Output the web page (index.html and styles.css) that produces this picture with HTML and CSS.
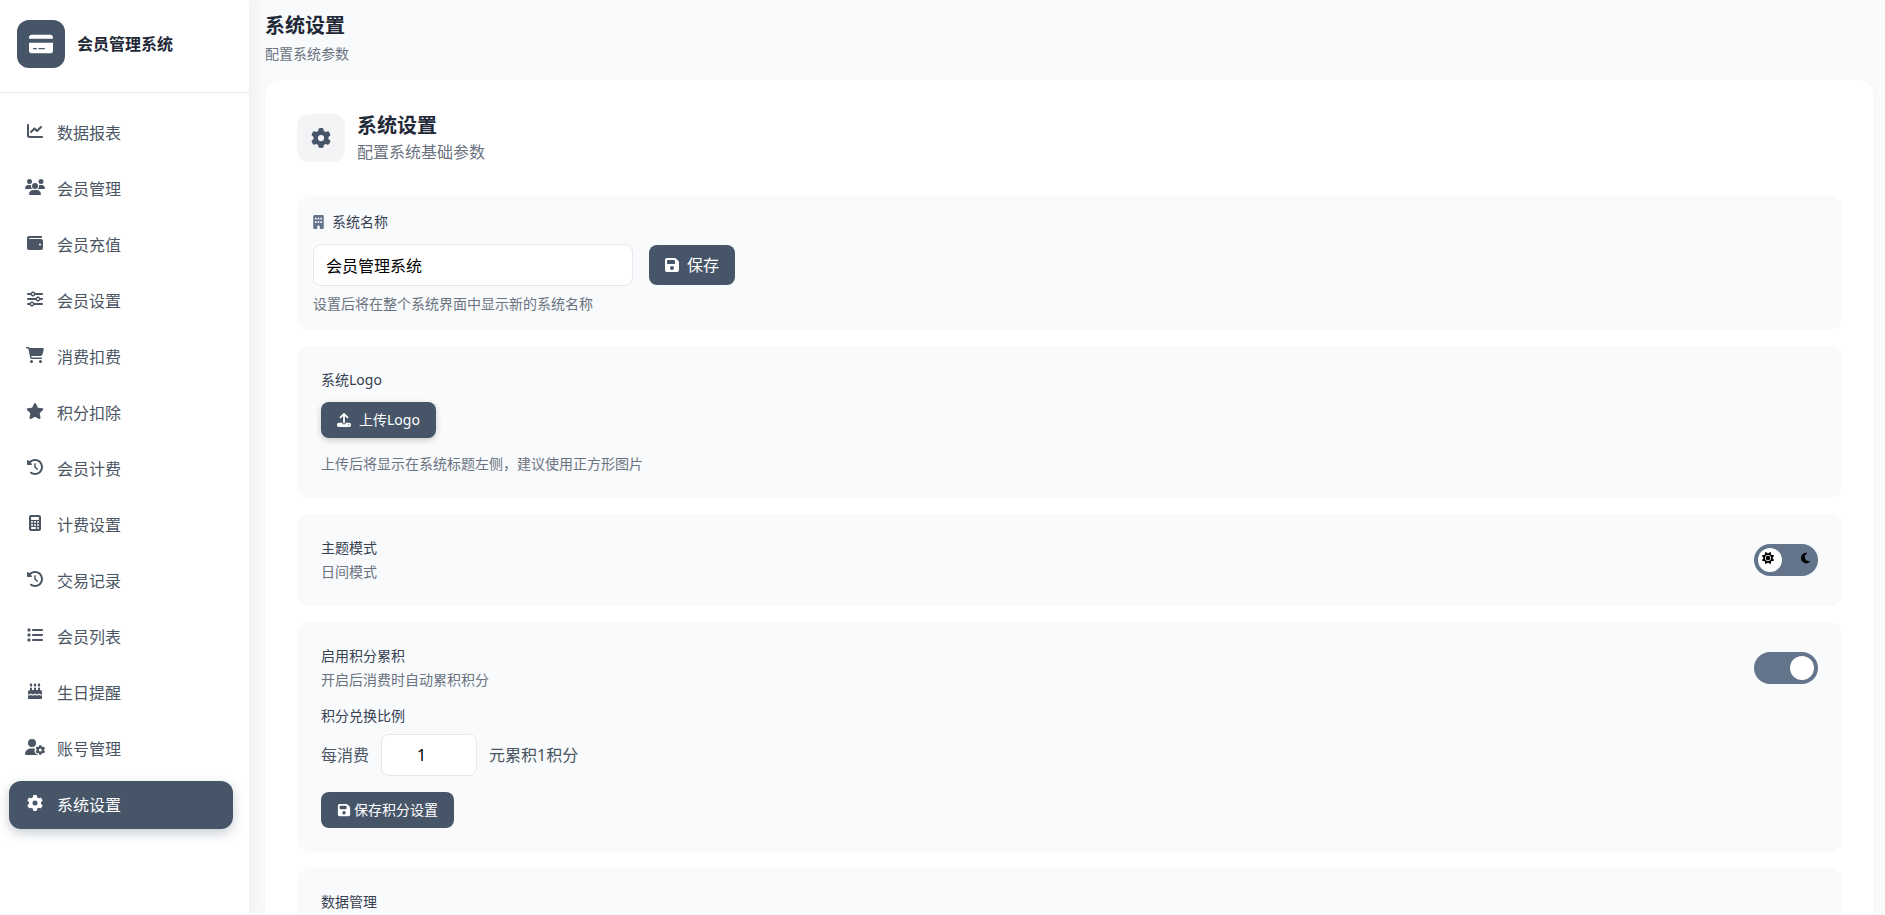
FILE: index.html
```html
<!DOCTYPE html>
<html lang="zh-CN">
<head>
    <meta charset="UTF-8">
    <meta name="viewport" content="width=device-width, initial-scale=1.0">
    <title>会员管理系统</title>
    <link rel="stylesheet" href="styles.css">
</head>
<body>
    <!-- Icon sprite -->
    <svg class="sprite" aria-hidden="true">
        <symbol id="i-card" viewBox="0 0 576 512"><path d="M64 32C28.700 32 0 60.700 0 96v32H576V96c0-35.300-28.700-64-64-64H64zM576 224H0V416c0 35.300 28.700 64 64 64H512c35.300 0 64-28.700 64-64V224zM112 352h64c8.800 0 16 7.200 16 16s-7.200 16-16 16H112c-8.800 0-16-7.200-16-16s7.200-16 16-16zm112 16c0-8.800 7.200-16 16-16H368c8.800 0 16 7.200 16 16s-7.200 16-16 16H240c-8.800 0-16-7.200-16-16z"/></symbol>
        <symbol id="i-chart" viewBox="0 0 512 512"><path d="M64 64c0-17.700-14.300-32-32-32S0 46.300 0 64V400c0 44.200 35.800 80 80 80H480c17.700 0 32-14.300 32-32s-14.300-32-32-32H80c-8.800 0-16-7.200-16-16V64zm406.600 86.600c12.500-12.500 12.500-32.800 0-45.300s-32.800-12.500-45.300 0L320 210.700l-57.400-57.400c-12.500-12.500-32.800-12.500-45.300 0l-112 112c-12.500 12.500-12.500 32.800 0 45.300s32.800 12.500 45.300 0L240 221.300l57.400 57.400c12.500 12.500 32.800 12.500 45.300 0l128-128z"/></symbol>
        <symbol id="i-users" viewBox="0 0 640 512"><path d="M144 0a80 80 0 1 1 0 160A80 80 0 1 1 144 0zM512 0a80 80 0 1 1 0 160A80 80 0 1 1 512 0zM0 298.700C0 239.800 47.800 192 106.700 192h42.700c15.900 0 31 3.500 44.600 9.700c-1.300 7.200-1.900 14.700-1.900 22.300c0 38.200 16.800 72.500 43.300 96c-.2 0-.4 0-.7 0H21.300C9.600 320 0 310.400 0 298.700zM405.300 320c-.2 0-.4 0-.7 0c26.600-23.500 43.300-57.800 43.300-96c0-7.600-.7-15-1.900-22.300c13.600-6.300 28.700-9.700 44.600-9.700h42.700C592.200 192 640 239.800 640 298.700c0 11.800-9.600 21.300-21.300 21.300H405.300zM224 224a96 96 0 1 1 192 0 96 96 0 1 1 -192 0zM128 485.300C128 411.700 187.700 352 261.300 352H378.700C452.300 352 512 411.700 512 485.300c0 14.700-11.900 26.700-26.700 26.700H154.700c-14.700 0-26.700-11.900-26.700-26.700z"/></symbol>
        <symbol id="i-wallet" viewBox="0 0 512 512"><path d="M64 32C28.700 32 0 60.700 0 96V416c0 35.300 28.700 64 64 64H448c35.300 0 64-28.700 64-64V192c0-35.300-28.700-64-64-64H80c-8.800 0-16-7.200-16-16s7.200-16 16-16H448c17.700 0 32-14.300 32-32s-14.300-32-32-32H64zM416 272a32 32 0 1 1 0 64 32 32 0 1 1 0-64z"/></symbol>
        <symbol id="i-sliders" viewBox="0 0 512 512"><path d="M0 416c0 17.700 14.300 32 32 32l54.700 0c12.300 28.300 40.500 48 73.300 48s61-19.700 73.300-48L480 448c17.700 0 32-14.300 32-32s-14.300-32-32-32l-246.700 0c-12.300-28.300-40.500-48-73.300-48s-61 19.700-73.300 48L32 384c-17.700 0-32 14.300-32 32zm128 0a32 32 0 1 1 64 0 32 32 0 1 1 -64 0zM320 256a32 32 0 1 1 64 0 32 32 0 1 1 -64 0zm32-80c-32.800 0-61 19.700-73.300 48L32 224c-17.700 0-32 14.300-32 32s14.300 32 32 32l246.700 0c12.300 28.300 40.500 48 73.300 48s61-19.700 73.300-48l54.700 0c17.700 0 32-14.300 32-32s-14.300-32-32-32l-54.700 0c-12.300-28.300-40.500-48-73.300-48zM192 128a32 32 0 1 1 0-64 32 32 0 1 1 0 64zm73.300-64C253 35.700 224.800 16 192 16s-61 19.700-73.300 48L32 64C14.300 64 0 78.300 0 96s14.300 32 32 32l86.700 0c12.300 28.300 40.500 48 73.300 48s61-19.700 73.300-48L480 128c17.700 0 32-14.300 32-32s-14.300-32-32-32L265.300 64z"/></symbol>
        <symbol id="i-cart" viewBox="0 0 576 512"><path d="M0 24C0 10.700 10.700 0 24 0H69.500c22 0 41.500 12.800 50.600 32h411c26.300 0 45.500 25 38.600 50.400l-41 152.300c-8.500 31.400-37 53.300-69.500 53.300H170.700l5.400 28.500c2.200 11.300 12.100 19.500 23.600 19.500H488c13.300 0 24 10.700 24 24s-10.700 24-24 24H199.700c-34.600 0-64.300-24.600-70.700-58.500L77.400 54.500c-.7-3.800-4-6.500-7.900-6.500H24C10.700 48 0 37.300 0 24zM128 464a48 48 0 1 1 96 0 48 48 0 1 1 -96 0zm336-48a48 48 0 1 1 0 96 48 48 0 1 1 0-96z"/></symbol>
        <symbol id="i-star" viewBox="0 0 576 512"><path d="M316.900 18C311.600 7 300.400 0 288.100 0s-23.400 7-28.800 18L195 150.300 51.400 171.500c-12 1.800-22 10.200-25.700 21.700s-.7 24.200 7.900 32.700L137.800 329 113.200 474.700c-2 12 3 24.200 12.900 31.300s23 8 33.800 2.300l128.300-68.500 128.300 68.500c10.800 5.700 23.900 4.900 33.800-2.300s14.900-19.300 12.900-31.300L438.500 329 542.700 225.900c8.600-8.500 11.700-21.200 7.900-32.700s-13.700-19.900-25.700-21.700L381.200 150.300 316.900 18z"/></symbol>
        <symbol id="i-history" viewBox="0 0 512 512"><path d="M75 75L41 41C25.900 25.900 0 36.600 0 57.900V168c0 13.300 10.700 24 24 24H134.100c21.400 0 32.100-25.900 17-41l-30.800-30.800C155 85.500 203 64 256 64c106 0 192 86 192 192s-86 192-192 192c-40.800 0-78.600-12.700-109.700-34.400c-14.500-10.100-34.400-6.600-44.600 7.900s-6.600 34.400 7.900 44.600C151.200 495 201.700 512 256 512c141.400 0 256-114.600 256-256S397.400 0 256 0C185.300 0 121.300 28.700 75 75zm181 53c-13.300 0-24 10.700-24 24V256c0 6.400 2.500 12.500 7 17l72 72c9.400 9.400 24.600 9.400 33.900 0s9.400-24.600 0-33.900l-65-65V152c0-13.300-10.700-24-24-24z"/></symbol>
        <symbol id="i-calculator" viewBox="0 0 384 512"><path d="M64 0C28.700 0 0 28.700 0 64V448c0 35.300 28.700 64 64 64H320c35.300 0 64-28.700 64-64V64c0-35.300-28.700-64-64-64H64zM96 64H288c17.700 0 32 14.300 32 32v32c0 17.700-14.300 32-32 32H96c-17.700 0-32-14.300-32-32V96c0-17.700 14.300-32 32-32zm32 160a32 32 0 1 1 -64 0 32 32 0 1 1 64 0zM96 352a32 32 0 1 1 0-64 32 32 0 1 1 0 64zM64 416c0-17.700 14.300-32 32-32h96c17.700 0 32 14.300 32 32s-14.300 32-32 32H96c-17.700 0-32-14.300-32-32zM192 256a32 32 0 1 1 0-64 32 32 0 1 1 0 64zm32 64a32 32 0 1 1 -64 0 32 32 0 1 1 64 0zm64-64a32 32 0 1 1 0-64 32 32 0 1 1 0 64zm32 64a32 32 0 1 1 -64 0 32 32 0 1 1 64 0zM288 448a32 32 0 1 1 0-64 32 32 0 1 1 0 64z"/></symbol>
        <symbol id="i-list" viewBox="0 0 512 512"><path d="M40 48C26.700 48 16 58.700 16 72v48c0 13.300 10.700 24 24 24H88c13.300 0 24-10.700 24-24V72c0-13.300-10.700-24-24-24H40zM192 64c-17.700 0-32 14.300-32 32s14.300 32 32 32H480c17.700 0 32-14.300 32-32s-14.300-32-32-32H192zm0 160c-17.700 0-32 14.300-32 32s14.300 32 32 32H480c17.700 0 32-14.300 32-32s-14.300-32-32-32H192zm0 160c-17.700 0-32 14.300-32 32s14.300 32 32 32H480c17.700 0 32-14.300 32-32s-14.300-32-32-32H192zM16 232v48c0 13.300 10.700 24 24 24H88c13.300 0 24-10.700 24-24V232c0-13.300-10.700-24-24-24H40c-13.300 0-24 10.700-24 24zM40 368c-13.300 0-24 10.700-24 24v48c0 13.300 10.700 24 24 24H88c13.300 0 24-10.700 24-24V392c0-13.300-10.700-24-24-24H40z"/></symbol>
        <symbol id="i-cake" viewBox="0 0 448 512"><path d="M86.400 5.500L61.800 47.600C58 54.100 56 61.600 56 69.200V72c0 22.100 17.900 40 40 40s40-17.900 40-40V69.200c0-7.600-2-15-5.800-21.600L105.600 5.500C103.600 2.100 100 0 96 0s-7.600 2.100-9.600 5.500zm128 0L189.800 47.600c-3.800 6.500-5.800 14-5.800 21.600V72c0 22.100 17.900 40 40 40s40-17.900 40-40V69.200c0-7.600-2-15-5.800-21.600L233.600 5.500C231.600 2.100 228 0 224 0s-7.600 2.100-9.600 5.500zM317.800 47.600c-3.800 6.500-5.800 14-5.800 21.600V72c0 22.100 17.900 40 40 40s40-17.900 40-40V69.200c0-7.600-2-15-5.800-21.600L361.600 5.500C359.600 2.100 356 0 352 0s-7.600 2.100-9.600 5.500L317.800 47.600zM128 176c0-17.700-14.300-32-32-32s-32 14.300-32 32v48c-35.300 0-64 28.700-64 64v71c8.300 5.200 18.100 9 28.800 9c13.500 0 27.200-6.100 38.400-13.400c5.400-3.500 9.900-7.100 13-9.700c1.500-1.300 2.700-2.400 3.500-3.100l.9-.9c3.100-3.200 7.400-4.900 11.900-4.800s8.600 2.100 11.600 5.400l.8 .8c.7 .7 1.700 1.700 3.100 3c2.800 2.600 6.800 6.100 11.800 9.500c10.200 7.100 23 13.100 36.300 13.100s26.100-6 36.300-13.100c5-3.500 9-6.900 11.800-9.500c1.400-1.300 2.400-2.300 3.100-3l.8-.8c3-3.500 7.400-5.400 12-5.400s9 2 12 5.400l.8 .8c.7 .7 1.700 1.700 3.100 3c2.800 2.600 6.800 6.100 11.800 9.500c10.200 7.100 23 13.100 36.300 13.100s26.100-6 36.300-13.100c5-3.500 9-6.900 11.800-9.500c1.400-1.300 2.400-2.300 3.100-3l.8-.8c2.900-3.400 7.100-5.300 11.600-5.400s8.700 1.600 11.900 4.800l.9 .9c.8 .7 1.900 1.800 3.500 3.100c3.100 2.600 7.500 6.200 13 9.700c11.200 7.300 24.900 13.400 38.400 13.400c10.700 0 20.500-3.900 28.800-9V288c0-35.300-28.700-64-64-64V176c0-17.700-14.300-32-32-32s-32 14.300-32 32v48H256V176c0-17.700-14.300-32-32-32s-32 14.300-32 32v48H128V176zM448 394.600c-8.500 3.300-18.200 5.400-28.800 5.400c-22.500 0-42.400-9.900-55.800-18.600c-4.100-2.700-7.800-5.400-10.900-7.800c-2.800 2.400-6.100 5-9.800 7.500C329.800 390 310.600 400 288 400s-41.800-10-54.600-18.900c-3.500-2.400-6.700-4.900-9.400-7.200c-2.700 2.300-5.900 4.700-9.400 7.200C201.800 390 182.600 400 160 400s-41.800-10-54.600-18.900c-3.700-2.600-7-5.200-9.800-7.500c-3.100 2.400-6.800 5.100-10.900 7.800C71.200 390.100 51.300 400 28.800 400c-10.600 0-20.300-2.200-28.800-5.400V480c0 17.700 14.300 32 32 32H416c17.700 0 32-14.300 32-32V394.600z"/></symbol>
        <symbol id="i-gear" viewBox="0 0 512 512"><path d="M495.900 166.600c3.200 8.700 .5 18.400-6.400 24.600l-43.300 39.400c1.100 8.300 1.700 16.800 1.700 25.400s-.6 17.100-1.700 25.400l43.300 39.400c6.900 6.200 9.600 15.900 6.400 24.600c-4.400 11.900-9.700 23.300-15.800 34.300l-4.700 8.100c-6.600 11-14 21.400-22.100 31.200c-5.900 7.200-15.700 9.600-24.500 6.800l-55.700-17.700c-13.400 10.300-28.200 18.900-44 25.400l-12.500 57.100c-2 9.100-9 16.300-18.200 17.800c-13.800 2.300-28 3.500-42.500 3.500s-28.700-1.200-42.500-3.500c-9.200-1.500-16.200-8.700-18.200-17.800l-12.500-57.100c-15.800-6.500-30.600-15.100-44-25.400L83.100 425.900c-8.800 2.800-18.600 .3-24.500-6.800c-8.100-9.800-15.500-20.200-22.100-31.200l-4.700-8.100c-6.100-11-11.400-22.400-15.800-34.300c-3.200-8.700-.5-18.400 6.400-24.600l43.300-39.400C64.600 273.100 64 264.600 64 256s.6-17.100 1.700-25.400L22.400 191.200c-6.900-6.200-9.600-15.900-6.400-24.600c4.400-11.900 9.700-23.300 15.800-34.300l4.700-8.100c6.600-11 14-21.400 22.100-31.200c5.900-7.200 15.700-9.600 24.500-6.800l55.700 17.700c13.400-10.300 28.200-18.900 44-25.400l12.500-57.100c2-9.100 9-16.300 18.200-17.800C227.300 1.200 241.500 0 256 0s28.700 1.200 42.500 3.500c9.200 1.500 16.200 8.700 18.200 17.800l12.500 57.100c15.800 6.500 30.600 15.100 44 25.400l55.700-17.700c8.800-2.800 18.600-.3 24.500 6.800c8.100 9.800 15.500 20.200 22.100 31.200l4.700 8.100c6.100 11 11.400 22.400 15.800 34.300zM256 336a80 80 0 1 0 0-160 80 80 0 1 0 0 160z"/></symbol>
        <symbol id="i-user-gear" viewBox="0 0 640 512"><path d="M224 0a128 128 0 1 1 0 256A128 128 0 1 1 224 0zM178.300 304h91.400c11.800 0 23.400 1.200 34.500 3.300c-2.100 18.500 7.400 35.600 21.800 44.800c-16.600 10.600-26.700 31.600-20 53.300c4 12.900 9.400 25.500 16.400 37.600s15.200 23.100 24.400 33c15.700 16.900 39.600 18.400 57.200 8.700v.9c0 9.200 2.700 18.500 7.900 26.300H29.700C13.300 512 0 498.700 0 482.300C0 383.800 79.800 304 178.300 304z"/><use href="#i-gear" x="334" y="192" width="312" height="320"/></symbol>
        <symbol id="i-building" viewBox="0 0 384 512"><path d="M48 0C21.500 0 0 21.500 0 48V464c0 26.500 21.500 48 48 48h96V432c0-26.500 21.500-48 48-48s48 21.500 48 48v80h96c26.500 0 48-21.500 48-48V48c0-26.500-21.500-48-48-48H48zM64 240c0-8.800 7.200-16 16-16h32c8.800 0 16 7.200 16 16v32c0 8.800-7.200 16-16 16H80c-8.800 0-16-7.200-16-16V240zm112-16h32c8.800 0 16 7.200 16 16v32c0 8.800-7.200 16-16 16H176c-8.800 0-16-7.200-16-16V240c0-8.800 7.200-16 16-16zm80 16c0-8.800 7.200-16 16-16h32c8.800 0 16 7.200 16 16v32c0 8.800-7.200 16-16 16H272c-8.800 0-16-7.200-16-16V240zM80 96h32c8.800 0 16 7.200 16 16v32c0 8.800-7.200 16-16 16H80c-8.800 0-16-7.200-16-16V112c0-8.800 7.200-16 16-16zm80 16c0-8.800 7.200-16 16-16h32c8.800 0 16 7.200 16 16v32c0 8.800-7.200 16-16 16H176c-8.800 0-16-7.200-16-16V112zM272 96h32c8.800 0 16 7.200 16 16v32c0 8.800-7.200 16-16 16H272c-8.800 0-16-7.200-16-16V112c0-8.800 7.200-16 16-16z"/></symbol>
        <symbol id="i-save" viewBox="0 0 448 512"><path d="M64 32C28.700 32 0 60.700 0 96V416c0 35.300 28.700 64 64 64H384c35.300 0 64-28.700 64-64V173.300c0-17-6.700-33.300-18.700-45.300L352 50.700C340 38.700 323.700 32 306.700 32H64zm0 96c0-17.700 14.300-32 32-32H288c17.700 0 32 14.300 32 32v64c0 17.700-14.300 32-32 32H96c-17.700 0-32-14.300-32-32V128zM224 288a64 64 0 1 1 0 128 64 64 0 1 1 0-128z"/></symbol>
        <symbol id="i-upload" viewBox="0 0 512 512"><path d="M288 109.300V352c0 17.700-14.300 32-32 32s-32-14.300-32-32V109.300l-73.400 73.400c-12.500 12.500-32.800 12.500-45.300 0s-12.500-32.800 0-45.300l128-128c12.500-12.500 32.800-12.500 45.300 0l128 128c12.500 12.500 12.500 32.800 0 45.300s-32.800 12.500-45.300 0L288 109.300zM64 352H192c0 35.300 28.700 64 64 64s64-28.700 64-64H448c35.300 0 64 28.700 64 64v32c0 35.300-28.700 64-64 64H64c-35.300 0-64-28.700-64-64V416c0-35.300 28.700-64 64-64zM432 456a24 24 0 1 0 0-48 24 24 0 1 0 0 48z"/></symbol>
        <symbol id="i-sun" viewBox="0 0 512 512"><path d="M361.500 1.200c5 2.100 8.600 6.600 9.600 11.900L391 121l107.900 19.800c5.300 1 9.800 4.600 11.900 9.600s1.500 10.700-1.600 15.200L446.900 256l62.300 90.300c3.100 4.500 3.700 10.200 1.600 15.200s-6.600 8.600-11.900 9.600L391 391 371.100 498.900c-1 5.300-4.600 9.800-9.600 11.900s-10.700 1.500-15.200-1.600L256 446.900l-90.300 62.300c-4.500 3.100-10.200 3.700-15.200 1.600s-8.600-6.600-9.600-11.900L121 391 13.100 371.100c-5.300-1-9.800-4.600-11.900-9.600s-1.500-10.700 1.600-15.200L65.100 256 2.800 165.700c-3.100-4.500-3.700-10.200-1.600-15.200s6.600-8.600 11.900-9.600L121 121 140.900 13.100c1-5.300 4.600-9.800 9.600-11.900s10.700-1.500 15.200 1.600L256 65.100 346.300 2.800c4.500-3.100 10.200-3.700 15.200-1.600zM160 256a96 96 0 1 1 192 0 96 96 0 1 1 -192 0zm224 0a128 128 0 1 0 -256 0 128 128 0 1 0 256 0z"/></symbol>
        <symbol id="i-moon" viewBox="0 0 384 512"><path d="M223.500 32C100 32 0 132.300 0 256S100 480 223.500 480c60.600 0 115.500-24.200 155.800-63.400c5-4.900 6.300-12.500 3.100-18.700s-10.100-9.700-17-8.500c-9.800 1.700-19.800 2.600-30.100 2.600c-96.900 0-175.500-78.800-175.500-176c0-65.800 36-123.100 89.300-153.300c6.100-3.500 9.200-10.500 7.700-17.300s-7.300-11.900-14.300-12.500c-6.300-.5-12.600-.8-19-.8z"/></symbol>
    </svg>

    <div class="layout">
        <aside class="sidebar">
            <div class="brand">
                <div class="brand-logo"><svg class="icon-lg"><use href="#i-card"/></svg></div>
                <span class="brand-name">会员管理系统</span>
            </div>
            <nav class="nav">
                <a href="#" class="nav-item"><span class="nav-icon"><svg><use href="#i-chart"/></svg></span>数据报表</a>
                <a href="#" class="nav-item"><span class="nav-icon"><svg><use href="#i-users"/></svg></span>会员管理</a>
                <a href="#" class="nav-item"><span class="nav-icon"><svg><use href="#i-wallet"/></svg></span>会员充值</a>
                <a href="#" class="nav-item"><span class="nav-icon"><svg><use href="#i-sliders"/></svg></span>会员设置</a>
                <a href="#" class="nav-item"><span class="nav-icon"><svg><use href="#i-cart"/></svg></span>消费扣费</a>
                <a href="#" class="nav-item"><span class="nav-icon"><svg><use href="#i-star"/></svg></span>积分扣除</a>
                <a href="#" class="nav-item"><span class="nav-icon"><svg><use href="#i-history"/></svg></span>会员计费</a>
                <a href="#" class="nav-item"><span class="nav-icon"><svg><use href="#i-calculator"/></svg></span>计费设置</a>
                <a href="#" class="nav-item"><span class="nav-icon"><svg><use href="#i-history"/></svg></span>交易记录</a>
                <a href="#" class="nav-item"><span class="nav-icon"><svg><use href="#i-list"/></svg></span>会员列表</a>
                <a href="#" class="nav-item"><span class="nav-icon"><svg><use href="#i-cake"/></svg></span>生日提醒</a>
                <a href="#" class="nav-item"><span class="nav-icon"><svg><use href="#i-user-gear"/></svg></span>账号管理</a>
                <a href="#" class="nav-item active"><span class="nav-icon"><svg><use href="#i-gear"/></svg></span>系统设置</a>
            </nav>
        </aside>

        <main class="main">
            <header class="page-header">
                <h1>系统设置</h1>
                <p class="hint">配置系统参数</p>
            </header>

            <div class="card">
                <div class="card-header">
                    <div class="card-icon"><svg class="icon-md"><use href="#i-gear"/></svg></div>
                    <div>
                        <h2>系统设置</h2>
                        <p>配置系统基础参数</p>
                    </div>
                </div>

                <!-- System name -->
                <section class="panel panel-compact">
                    <label for="system-name" class="field-label"><svg class="icon-building"><use href="#i-building"/></svg>系统名称</label>
                    <div class="name-row">
                        <input type="text" id="system-name" class="input" value="会员管理系统">
                        <button type="button" class="btn"><svg class="icon"><use href="#i-save"/></svg>保存</button>
                    </div>
                    <p class="hint name-hint">设置后将在整个系统界面中显示新的系统名称</p>
                </section>

                <!-- Logo -->
                <section class="panel">
                    <h3 class="field-label">系统Logo</h3>
                    <button type="button" class="btn btn-sm btn-raised"><svg class="icon-sm"><use href="#i-upload"/></svg>上传Logo</button>
                    <p class="hint logo-hint">上传后将显示在系统标题左侧，建议使用正方形图片</p>
                </section>

                <!-- Theme -->
                <section class="panel">
                    <div class="switch-row">
                        <div class="switch-text">
                            <label for="theme">主题模式</label>
                            <p class="hint">日间模式</p>
                        </div>
                        <div class="switch-wrap">
                            <input type="checkbox" id="theme" class="switch">
                            <svg class="switch-icon sun"><use href="#i-sun"/></svg>
                            <svg class="switch-icon moon"><use href="#i-moon"/></svg>
                        </div>
                    </div>
                </section>

                <!-- Points -->
                <section class="panel">
                    <div class="switch-row">
                        <div class="switch-text">
                            <label for="points">启用积分累积</label>
                            <p class="hint">开启后消费时自动累积积分</p>
                        </div>
                        <div class="switch-wrap">
                            <input type="checkbox" id="points" class="switch" checked>
                        </div>
                    </div>
                    <label for="ratio" class="ratio-label">积分兑换比例</label>
                    <div class="ratio-row">
                        <span>每消费</span>
                        <input type="number" id="ratio" class="input input-number" value="1" min="1">
                        <span>元累积1积分</span>
                    </div>
                    <button type="button" class="btn btn-sm btn-tight"><svg class="icon-sm"><use href="#i-save"/></svg>保存积分设置</button>
                </section>

                <!-- Data -->
                <section class="panel">
                    <h3 class="field-label">数据管理</h3>
                </section>
            </div>
        </main>
    </div>
</body>
</html>
```
FILE: styles.css
```css
:root {
    --primary: #475569;
    --switch: #64748b;
    --bg: #f8fafc;
    --border: #e5e7eb;
    --heading: #1f2937;
    --label: #374151;
    --text: #4b5563;
    --muted: #6b7280;
}

* {
    box-sizing: border-box;
    margin: 0;
    padding: 0;
}

body {
    font-family: "Noto Sans", "Noto Sans CJK SC", sans-serif;
    font-size: 16px;
    line-height: 24px;
    color: var(--text);
    background: var(--bg);
}

svg {
    display: block;
    fill: currentColor;
}

input,
button {
    font: inherit;
}

.sprite {
    display: none;
}

.layout {
    display: flex;
    height: 100vh;
    overflow: hidden;
}

/* Sidebar */
.sidebar {
    flex: none;
    width: 249px;
    background: #fff;
    box-shadow: 4px 0 16px rgba(0, 0, 0, 0.05);
}

.brand {
    display: flex;
    align-items: center;
    gap: 12px;
    padding: 20px 17px 24px;
    border-bottom: 1px solid var(--border);
}

.brand-logo {
    display: flex;
    align-items: center;
    justify-content: center;
    width: 48px;
    height: 48px;
    color: #fff;
    background: var(--primary);
    border-radius: 12px;
}

.brand-name {
    font-weight: 700;
    color: var(--heading);
}

.nav {
    display: flex;
    flex-direction: column;
    gap: 8px;
    padding: 16px 16px 16px 9px;
}

.nav-item {
    display: flex;
    align-items: center;
    gap: 12px;
    height: 48px;
    padding: 0 16px;
    color: var(--text);
    text-decoration: none;
    border-radius: 12px;
}

.nav-item:hover {
    background: #f3f4f6;
}

.nav-item.active {
    color: #fff;
    background: var(--primary);
    box-shadow: 0 4px 12px rgba(71, 85, 105, 0.3);
}

.nav-icon {
    width: 20px;
    padding-bottom: 4px;
}

.nav-icon svg {
    width: 20px;
    height: 16px;
}

/* Icon sizes */
.icon-lg {
    width: 24px;
    height: 22px;
}

.icon-md {
    width: 20px;
    height: 20px;
}

.icon {
    width: 14px;
    height: 16px;
}

.icon-sm {
    width: 14px;
    height: 14px;
}

.icon-building {
    width: 11px;
    height: 14px;
    color: var(--switch);
}

/* Content */
.main {
    flex: 1;
    padding: 12px 11px 16px 16px;
    overflow-y: auto;
    scrollbar-width: none;
}

.page-header {
    margin-bottom: 16px;
}

h1,
h2 {
    font-size: 20px;
    line-height: 28px;
    font-weight: 700;
    color: var(--heading);
}

.page-header .hint {
    margin-top: 4px;
}

.hint {
    font-size: 14px;
    line-height: 20px;
    color: var(--muted);
}

.card {
    padding: 32px;
    background: #fff;
    border-radius: 16px;
    box-shadow: 0 1px 3px rgba(0, 0, 0, 0.05);
}

.card-header {
    display: flex;
    align-items: center;
    gap: 12px;
    margin-bottom: 32px;
    color: var(--muted);
}

.card-icon {
    display: flex;
    align-items: center;
    justify-content: center;
    width: 48px;
    height: 48px;
    color: var(--primary);
    background: #f3f4f6;
    border-radius: 12px;
}

.panel {
    padding: 24px;
    background: var(--bg);
    border-radius: 12px;
}

.panel + .panel {
    margin-top: 16px;
}

.panel-compact {
    padding: 16px;
}

.field-label,
.ratio-label,
.switch-text label {
    font-size: 14px;
    line-height: 20px;
    font-weight: 400;
    color: var(--label);
}

.field-label {
    display: flex;
    align-items: center;
    gap: 8px;
    margin-bottom: 12px;
}

.name-row {
    display: flex;
    align-items: center;
    gap: 16px;
}

.name-hint {
    margin-top: 8px;
}

.logo-hint {
    margin-top: 16px;
}

.input {
    width: 320px;
    height: 42px;
    padding: 8px 12px;
    color: #000;
    background: #fff;
    border: 1px solid var(--border);
    border-radius: 8px;
    outline: none;
}

.input:focus {
    border-color: var(--primary);
}

/* Spin buttons keep their room so the value sits left of centre */
.input-number {
    width: 96px;
    text-align: center;
}

.input-number::-webkit-inner-spin-button {
    opacity: 0;
}

.btn {
    display: flex;
    align-items: center;
    gap: 8px;
    height: 40px;
    padding: 0 16px;
    color: #fff;
    background: var(--primary);
    border: none;
    border-radius: 8px;
    cursor: pointer;
}

.btn:hover {
    background: #334155;
}

.btn-sm {
    height: 36px;
    font-size: 14px;
    line-height: 20px;
}

.btn-tight {
    gap: 3px;
}

.btn-raised {
    box-shadow: 0 2px 6px rgba(0, 0, 0, 0.2);
}

/* Switches */
.switch-row {
    display: flex;
    align-items: center;
    justify-content: space-between;
}

.switch-text label {
    display: block;
    margin-bottom: 4px;
}

.switch-wrap {
    position: relative;
    height: 32px;
}

.switch {
    display: block;
    width: 64px;
    height: 32px;
    padding: 4px;
    appearance: none;
    background: var(--switch);
    border-radius: 16px;
    cursor: pointer;
}

.switch::before {
    content: "";
    display: block;
    width: 24px;
    height: 24px;
    background: #fff;
    border-radius: 50%;
}

.switch:checked::before {
    margin-left: auto;
}

.switch-icon {
    position: absolute;
    top: 8px;
    height: 12px;
    color: #000;
    pointer-events: none;
}

.sun {
    left: 8px;
    width: 12px;
}

.moon {
    right: 8px;
    width: 9px;
}

/* Points ratio */
.ratio-label {
    display: block;
    margin: 16px 0 8px;
}

.ratio-row {
    display: flex;
    align-items: center;
    gap: 12px;
    margin-bottom: 16px;
}
```
